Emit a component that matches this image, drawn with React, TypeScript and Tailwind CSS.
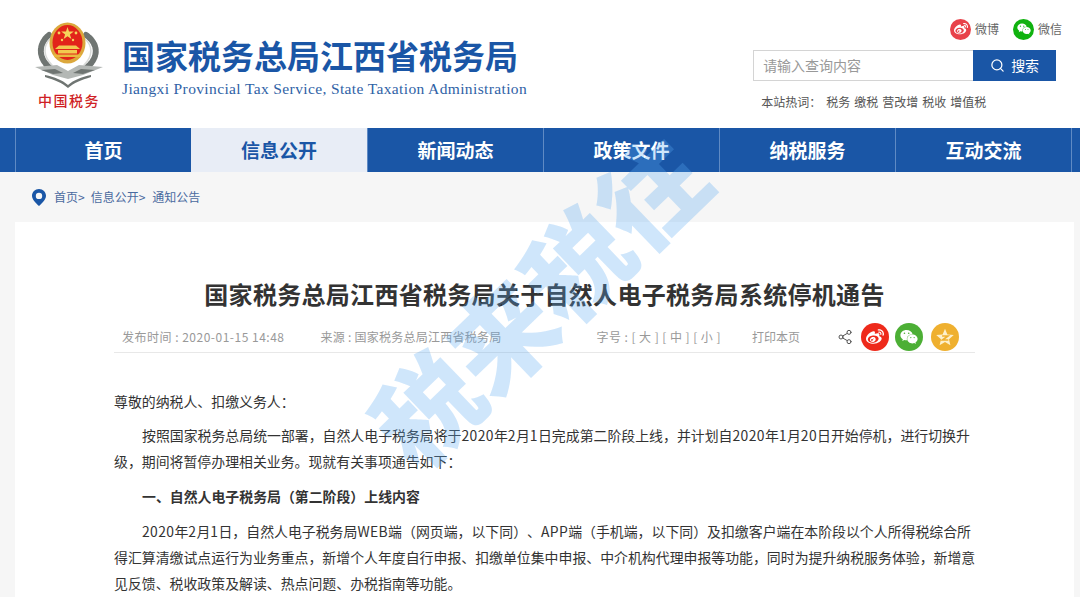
import type { ReactNode } from 'react';
import { Search, Share2 } from 'lucide-react';
import { FaWeibo, FaWeixin } from 'react-icons/fa';

const navItems = ['首页', '信息公开', '新闻动态', '政策文件', '纳税服务', '互动交流'];
const hotWords = ['税务', '缴税', '营改增', '税收', '增值税'];

// digits and latin run a bit wider than the CJK text around them
function Num({ children }: { children: ReactNode }) {
  return <span className="tracking-[0.4px]">{children}</span>;
}

function Emblem() {
  return (
    <svg width="72" height="68" viewBox="0 0 72 68" className="block">
      {/* wreath */}
      <g fill="none" strokeLinecap="round">
        <path d="M16 15 C5 24 5 38 17 48" stroke="#6f7572" strokeWidth="6" strokeDasharray="2.5 1.5" />
        <path d="M53 15 C66 24 66 38 53 48" stroke="#6f7572" strokeWidth="6" strokeDasharray="2.5 1.5" />
        <path d="M17 19 C10 26 10 36 19 45" stroke="#d9dbd9" strokeWidth="1.5" />
        <path d="M52 19 C60 26 60 36 51 45" stroke="#d9dbd9" strokeWidth="1.5" />
      </g>
      {/* wings and ribbon */}
      <path d="M2 47 L24 45 L35 51 L46 45 L70 47 L50 55 L35 59 L20 55 Z" fill="#b4b8b5" />
      <path d="M8 50 L22 49 L30 53 L20 54 Z" fill="#6f7572" />
      <path d="M62 50 L48 49 L40 53 L50 54 Z" fill="#6f7572" />
      <path d="M12 55 C22 57 29 60 35 65 C41 60 48 57 58 55 L58 57 C48 60 41 63 35 68 C29 63 22 60 12 57 Z" fill="#6f7572" />
      {/* medal */}
      <ellipse cx="34.5" cy="23" rx="18" ry="20.5" fill="#dca83c" />
      <ellipse cx="34.5" cy="22.5" rx="15" ry="17.5" fill="#e2231a" />
      <path d="M34.5 7 L36 11.6 L40.8 11.6 L36.9 14.4 L38.4 19 L34.5 16.2 L30.6 19 L32.1 14.4 L28.2 11.6 L33 11.6 Z" fill="#f5d35c" />
      <circle cx="26" cy="13" r="1.4" fill="#f5d35c" />
      <circle cx="43" cy="13" r="1.4" fill="#f5d35c" />
      <circle cx="29" cy="20" r="1.2" fill="#f5d35c" />
      <circle cx="40" cy="20" r="1.2" fill="#f5d35c" />
      <path d="M22 29 L47 29 L43 25.5 L26 25.5 Z" fill="#f2c94f" />
      <rect x="25" y="30" width="19" height="3.5" fill="#f2c94f" />
      <rect x="21" y="34.5" width="27" height="2.5" fill="#e9b93f" />
    </svg>
  );
}

function PinIcon() {
  return (
    <svg width="14" height="17" viewBox="0 0 14 17">
      <path
        fillRule="evenodd"
        d="M7 0 C3 0 0 3 0 6.8 C0 10.5 4 14.5 7 17 C10 14.5 14 10.5 14 6.8 C14 3 11 0 7 0 Z M7 3.7 A3.2 3.2 0 1 1 7 10.1 A3.2 3.2 0 1 1 7 3.7 Z"
        fill="#1a56a6"
      />
    </svg>
  );
}

function StarIcon() {
  return (
    <svg width="20" height="20" viewBox="0 0 24 24">
      <path d="M12 2 L14.9 8.9 L22.5 9.6 L16.8 14.6 L18.5 22 L12 18.1 L5.5 22 L7.2 14.6 L1.5 9.6 L9.1 8.9 Z" fill="#fdf0cc" />
      <path d="M8.5 10.8 H15.5 L9 15.6 H16" fill="none" stroke="#efb02f" strokeWidth="2" />
    </svg>
  );
}

export default function App() {
  return (
    <div
      className="relative h-[597px] w-[1080px] overflow-hidden bg-[#f6f6f6] text-[#333] [text-spacing-trim:space-all]"
      style={{ fontFamily: '"Noto Sans CJK SC", "Noto Sans", sans-serif' }}
    >
      <header className="flex h-[128px] bg-white">
        <div className="ml-[33px] flex w-[72px] flex-col items-center pt-[20px]">
          <Emblem />
          <div className="mt-[3px] whitespace-nowrap text-[14px] font-medium leading-[18px] tracking-[1.5px] text-[#cf1f25]">中国税务</div>
        </div>
        <div className="ml-[17px] pt-[35px]">
          <div className="whitespace-nowrap text-[33px] font-bold leading-[40px] text-[#1a56a6]">国家税务总局江西省税务局</div>
          <div className="mt-[4px] whitespace-nowrap font-['Liberation_Serif',serif] text-[15.5px] leading-[20px] tracking-[0.37px] text-[#2f62a6]">
            Jiangxi Provincial Tax Service, State Taxation Administration
          </div>
        </div>
        <div className="ml-[226px] w-[309px] pt-[18px]">
          <div className="flex h-[22px] items-center justify-end gap-[2px] text-[12px] text-[#666]">
            <span className="flex h-[21px] w-[21px] items-center justify-center rounded-full bg-[#e8424a] text-white"><FaWeibo size={14} /></span>
            <span className="ml-[2px] mr-[12px]">微博</span>
            <span className="flex h-[21px] w-[21px] items-center justify-center rounded-full bg-[#10b20f] text-white"><FaWeixin size={14} /></span>
            <span className="ml-[2px]">微信</span>
          </div>
          <div className="mt-[10px] flex h-[31px] w-[303px]">
            <div className="flex flex-1 items-center border border-r-0 border-[#d4d4d4] pl-[9px] text-[14px] text-[#999]">请输入查询内容</div>
            <div className="flex w-[83px] items-center justify-center gap-[6px] bg-[#1a56a6] text-[14px] text-white">
              <Search size={15} strokeWidth={2} />
              <span>搜索</span>
            </div>
          </div>
          <div className="mt-[12px] flex gap-[4px] pl-[8px] text-[12px] leading-[18px] text-[#555]">
            <span className="mr-[1px]">本站热词：</span>
            {hotWords.map((w) => <span key={w}>{w}</span>)}
          </div>
        </div>
      </header>

      <nav className="flex h-[44px] bg-[#1a56a6] pl-[15px]">
        {navItems.map((item, i) => (
          <div
            key={item}
            className={
              i === 1
                ? 'flex w-[176px] items-center justify-center bg-[#e8edf6] pt-[1px] text-[19px] font-bold text-[#1a56a6]'
                : 'flex w-[176px] items-center justify-center border-l border-[#5f8ac4] pt-[1px] text-[19px] font-bold text-white'
            }
          >
            {item}
          </div>
        ))}
        <div className="w-px bg-[#5f8ac4]" />
      </nav>

      <div className="flex h-[50px] items-center pl-[32px] text-[12px] text-[#4a6a9f]">
        <PinIcon />
        <span className="ml-[8px]">首页&gt;</span>
        <span className="ml-[6px]">信息公开&gt;</span>
        <span className="ml-[7px]">通知公告</span>
      </div>

      <main className="ml-[15px] h-[375px] w-[1059px] bg-white pl-[99px] pr-[95px] pt-[55px]">
        <h1 className="mr-[4px] text-center text-[24px] font-bold leading-[34px] tracking-[0.3px] text-[#333]">
          国家税务总局江西省税务局关于自然人电子税务局系统停机通告
        </h1>
        <div className="mr-[4px] mt-[11px] flex h-[31px] items-center border-b border-[#e8e8e8] pl-[8px] text-[12px] text-[#999]">
          <span className="tracking-[0.5px]">发布时间 : 2020-01-15 14:48</span>
          <span className="ml-[36px] tracking-[0.25px]">来源 : 国家税务总局江西省税务局</span>
          <span className="ml-[95px] tracking-[0.45px]">字号 : [ 大 ] [ 中 ] [ 小 ]</span>
          <span className="ml-[31px]">打印本页</span>
          <Share2 size={16} strokeWidth={1.5} className="ml-[37px] text-[#555]" />
          <span className="ml-[8px] flex h-[28px] w-[28px] shrink-0 items-center justify-center rounded-full bg-[#ee2a1b] text-white"><FaWeibo size={18} /></span>
          <span className="ml-[6px] flex h-[28px] w-[28px] shrink-0 items-center justify-center rounded-full bg-[#4caf35] text-white"><FaWeixin size={18} /></span>
          <span className="ml-[8px] flex h-[28px] w-[28px] shrink-0 items-center justify-center rounded-full bg-[#efb02f]"><StarIcon /></span>
        </div>
        <div className="mt-[35px] text-[13.9px] leading-[26px] text-[#333]">
          <p>尊敬的纳税人、扣缴义务人：</p>
          <p className="mt-[8px] indent-[28px]">按照国家税务总局统一部署，自然人电子税务局将于<Num>2020</Num>年<Num>2</Num>月<Num>1</Num>日完成第二阶段上线，并计划自<Num>2020</Num>年<Num>1</Num>月<Num>20</Num>日开始停机，进行切换升级，期间将暂停办理相关业务。现就有关事项通告如下：</p>
          <p className="mt-[9px] indent-[28px] font-bold">一、自然人电子税务局（第二阶段）上线内容</p>
          <p className="mt-[9px] indent-[28px]"><Num>2020</Num>年<Num>2</Num>月<Num>1</Num>日，自然人电子税务局<Num>WEB</Num>端（网页端，以下同）、<Num>APP</Num>端（手机端，以下同）及扣缴客户端在本阶段以个人所得税综合所得汇算清缴试点运行为业务重点，新增个人年度自行申报、扣缴单位集中申报、中介机构代理申报等功能，同时为提升纳税服务体验，新增意见反馈、税收政策及解读、热点问题、办税指南等功能。</p>
        </div>
      </main>

      <div className="pointer-events-none absolute left-[536px] top-[297px] -translate-x-1/2 -translate-y-1/2 -rotate-[44deg] whitespace-nowrap text-[104px] font-black leading-none text-[#5aa9f1]/[0.29]">
        税来税往
      </div>
    </div>
  );
}
